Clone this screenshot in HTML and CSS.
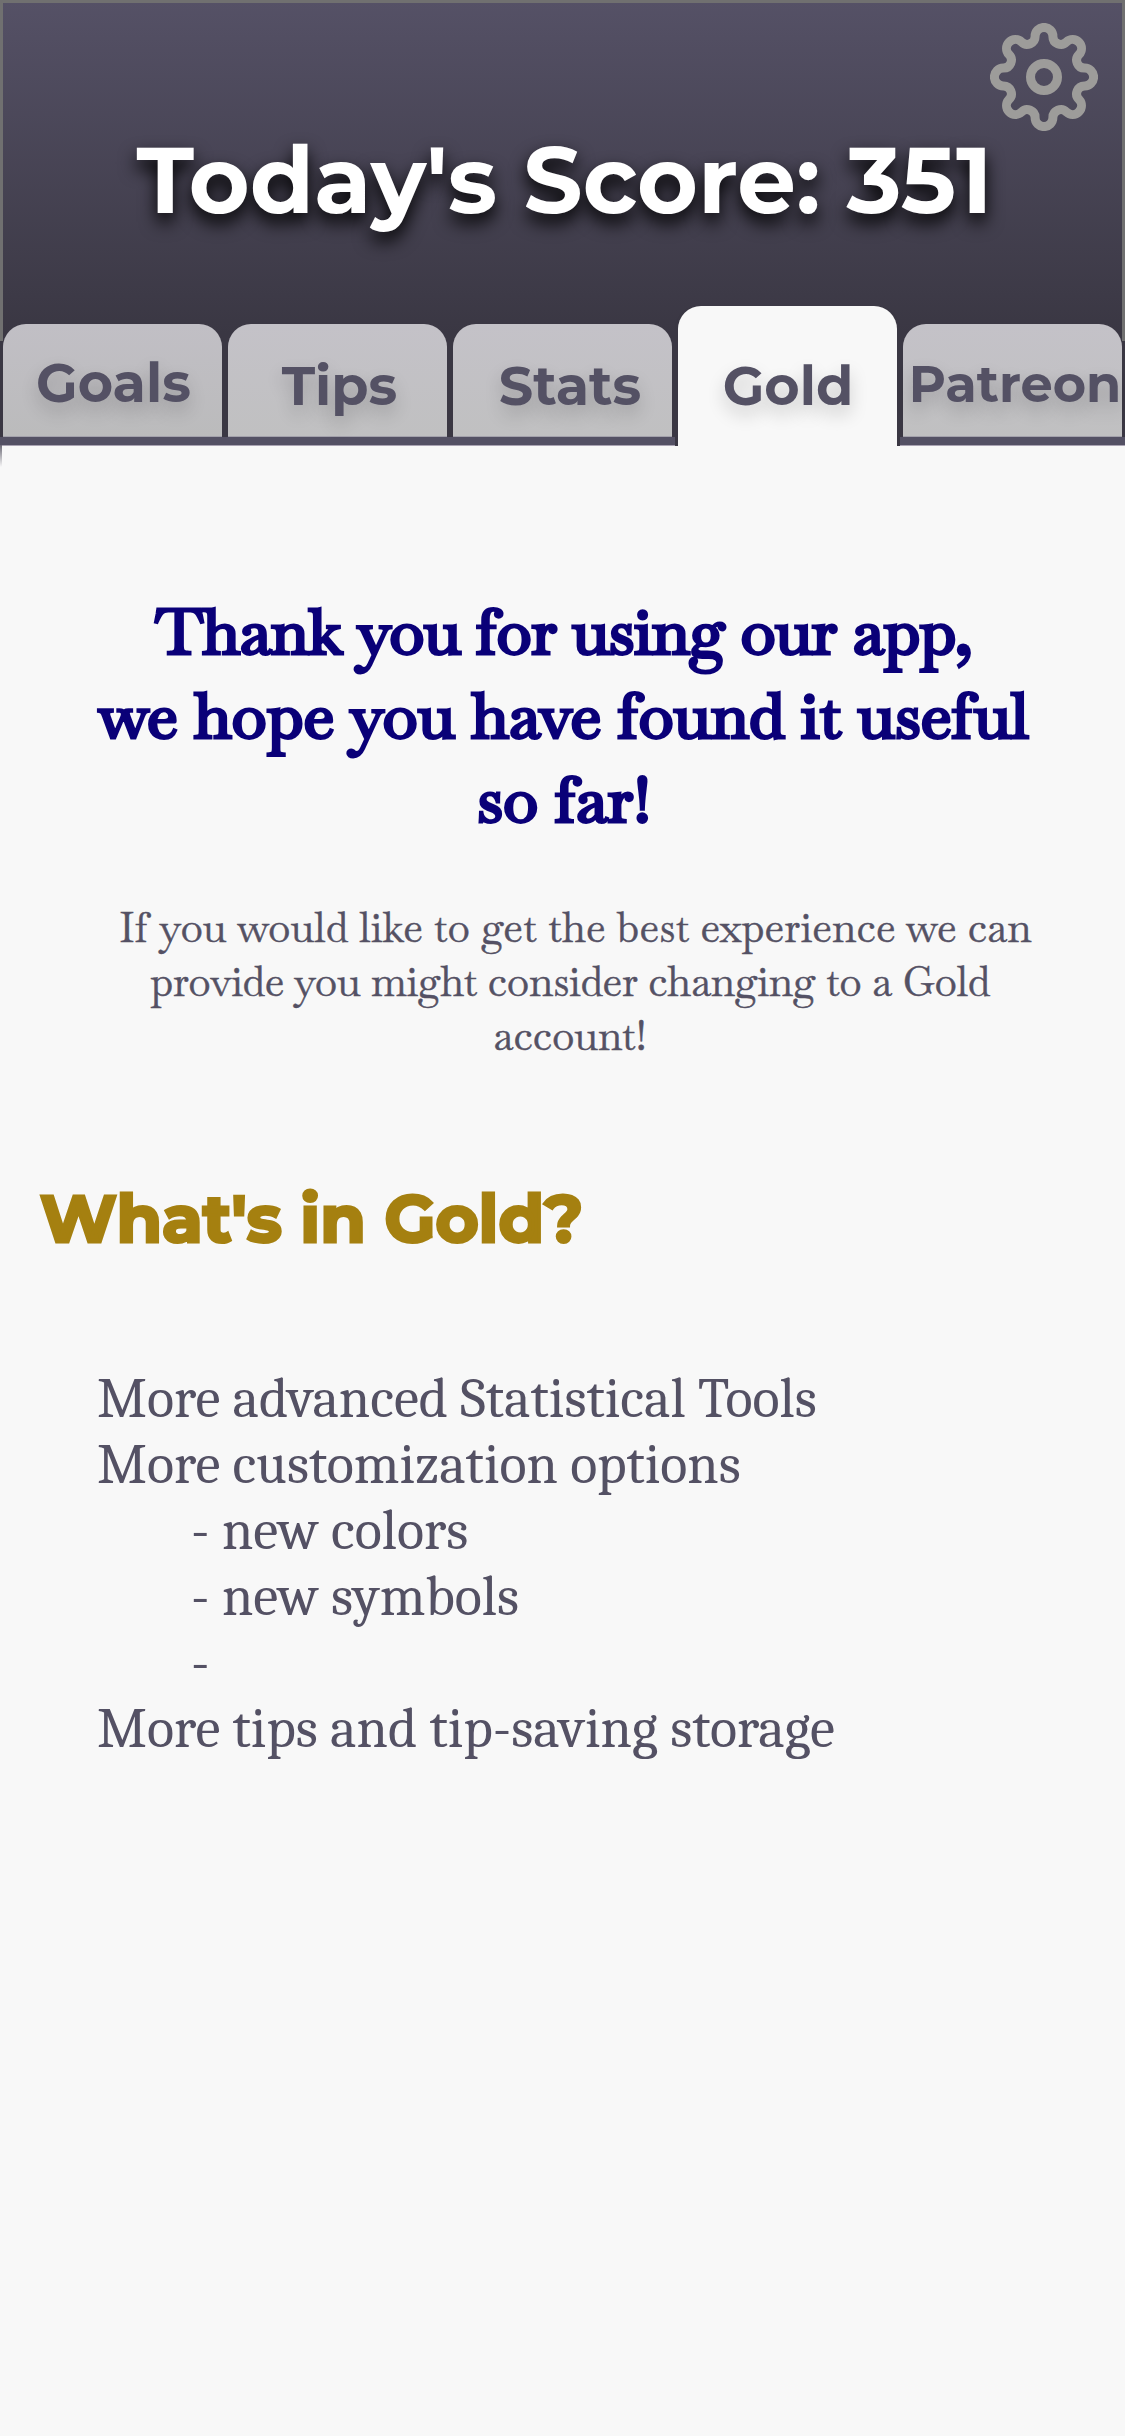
FILE: index.html
```html
<!DOCTYPE html>
<html lang="en">
<head>
<meta charset="utf-8">
<title>Gold</title>
<link rel="stylesheet" href="styles.css">
</head>
<body>
<header class="header">
  <h1 class="score">Today's Score: 351</h1>
  <svg class="gear" viewBox="-54 -54 108 108" fill="none" stroke="#9d9c9a" stroke-width="9" stroke-linejoin="round" aria-label="Settings">
    <path d="M-8.9-40.7A8.9 8.9 0 0 1 8.9-40.7A7.9 7.9 0 0 0 22.49-35.07A8.9 8.9 0 0 1 35.07-22.49A7.9 7.9 0 0 0 40.7-8.9A8.9 8.9 0 0 1 40.7 8.9A7.9 7.9 0 0 0 35.07 22.49A8.9 8.9 0 0 1 22.49 35.07A7.9 7.9 0 0 0 8.9 40.7A8.9 8.9 0 0 1-8.9 40.7A7.9 7.9 0 0 0-22.49 35.07A8.9 8.9 0 0 1-35.07 22.49A7.9 7.9 0 0 0-40.7 8.9A8.9 8.9 0 0 1-40.7-8.9A7.9 7.9 0 0 0-35.07-22.49A8.9 8.9 0 0 1-22.49-35.07A7.9 7.9 0 0 0-8.9-40.7Z"/>
    <circle r="13.5"/>
  </svg>
  <nav class="tabs">
    <a class="tab goals">Goals</a>
    <a class="tab tips">Tips</a>
    <a class="tab stats">Stats</a>
    <a class="tab active">Gold</a>
    <a class="tab patreon">Patreon</a>
  </nav>
</header>
<main class="content">
  <h2 class="thanks"><span class="l1">Thank you for using our app,</span><br><span class="l2">we hope you have found it useful</span><br>so far!</h2>
  <p class="pitch"><span class="first">If you would like to get the best experience we can</span><br><span class="second">provide you might consider changing to a Gold</span><br>account!</p>
  <h2 class="title">What's in Gold?</h2>
  <ul class="features">
    <li>More advanced Statistical Tools</li>
    <li>More customization options</li>
    <li class="sub">- new colors</li>
    <li class="sub">- new symbols</li>
    <li class="sub">-</li>
    <li>More tips and tip-saving storage</li>
  </ul>
</main>
</body>
</html>
```
FILE: styles.css
```css
* { box-sizing: border-box; }

body {
  margin: 0;
  min-height: 2436px;
  background: #f8f8f8;
  color: #545164;
  font-family: Montserrat, Inter, sans-serif;
}

.header {
  position: relative;
  display: flex;
  flex-direction: column;
  justify-content: space-between;
  height: 446px;
  padding-top: 130px;
  background: linear-gradient(#555166, #3a3743 75%);
  border-bottom: 1px solid #aaa4b3;
}

/* grey frame that ends where the outer tabs curve in */
.header::before {
  content: "";
  position: absolute;
  inset: 0 0 auto;
  height: 338px;
  border: 3px solid #707070;
  border-bottom: 0;
}

/* tapering tail of the frame on the left edge */
.header::after {
  content: "";
  position: absolute;
  top: 445px;
  left: 0;
  width: 1.5px;
  height: 22px;
  background: linear-gradient(#6c6a76, rgba(108, 106, 118, 0));
}

.score {
  margin: 0;
  padding-left: 4px;
  color: #fff;
  font-size: 93px;
  line-height: 100px;
  font-weight: 700;
  text-align: center;
  white-space: nowrap;
  text-shadow: 0 9px 18px #000;
}

.gear {
  position: absolute;
  top: 22.5px;
  left: 990.3px;
  width: 108px;
  height: 108px;
}

.tabs {
  position: relative;
  display: grid;
  grid-template-columns: repeat(5, 219px);
  gap: 6px;
  align-items: end;
  padding: 0 3px;
  background: linear-gradient(#545164, #545164) bottom / 100% 8px no-repeat;
}

.tab {
  height: 113px;
  margin-bottom: 8px;
  padding-top: 32px;
  border-radius: 23px 23px 0 0;
  border-bottom: 1px solid #a3a1ab;
  background: linear-gradient(#c4c2c8, #c0c0c1);
  font-size: 54px;
  line-height: 60px;
  font-weight: 700;
  text-align: center;
  white-space: nowrap;
  text-shadow: 0 9px 18px rgba(0, 0, 0, .18);
}

.goals { padding: 29px 0 0 2px; background: linear-gradient(#c1bfc5, #bbbbbc); }
.tips { padding-left: 4px; }
.stats { padding-left: 15px; }
.patreon { padding: 30px 0 0 5px; font-size: 51px; }

.active {
  height: 140px;
  margin-bottom: -1px;
  padding: 50px 0 0 1px;
  border-bottom: 0;
  background: #f8f8f8;
  box-shadow: 3px 0 #3a3743, -3px 0 #3a3743;
}

.content { padding-top: 144px; }

.thanks {
  margin: 0 0 59px;
  padding-left: 3px;
  color: #0a0078;
  font: 500 64px/84px Baskervville, "Liberation Serif", serif;
  text-align: center;
  -webkit-text-stroke: 3px #0a0078;
}
.l1 { letter-spacing: -.6px; }

.pitch {
  margin: 0 0 116px;
  padding-left: 15px;
  font: 41px/54px Baskervville, "Liberation Serif", serif;
  text-align: center;
  -webkit-text-stroke: .5px #545164;
}
.first { padding-left: 11px; letter-spacing: .14px; }
.second { letter-spacing: -.25px; }

.title {
  margin: 0 0 107px;
  padding-left: 40px;
  color: #a58010;
  font-size: 66px;
  line-height: 80px;
  font-weight: 700;
  -webkit-text-stroke: 3px #a58010;
}

.features {
  margin: 0;
  padding: 0 0 0 97px;
  list-style: none;
  font: 56.25px/66px Cambria, Caladea, "Liberation Serif", serif;
}
.sub { padding-left: 94px; }
```
